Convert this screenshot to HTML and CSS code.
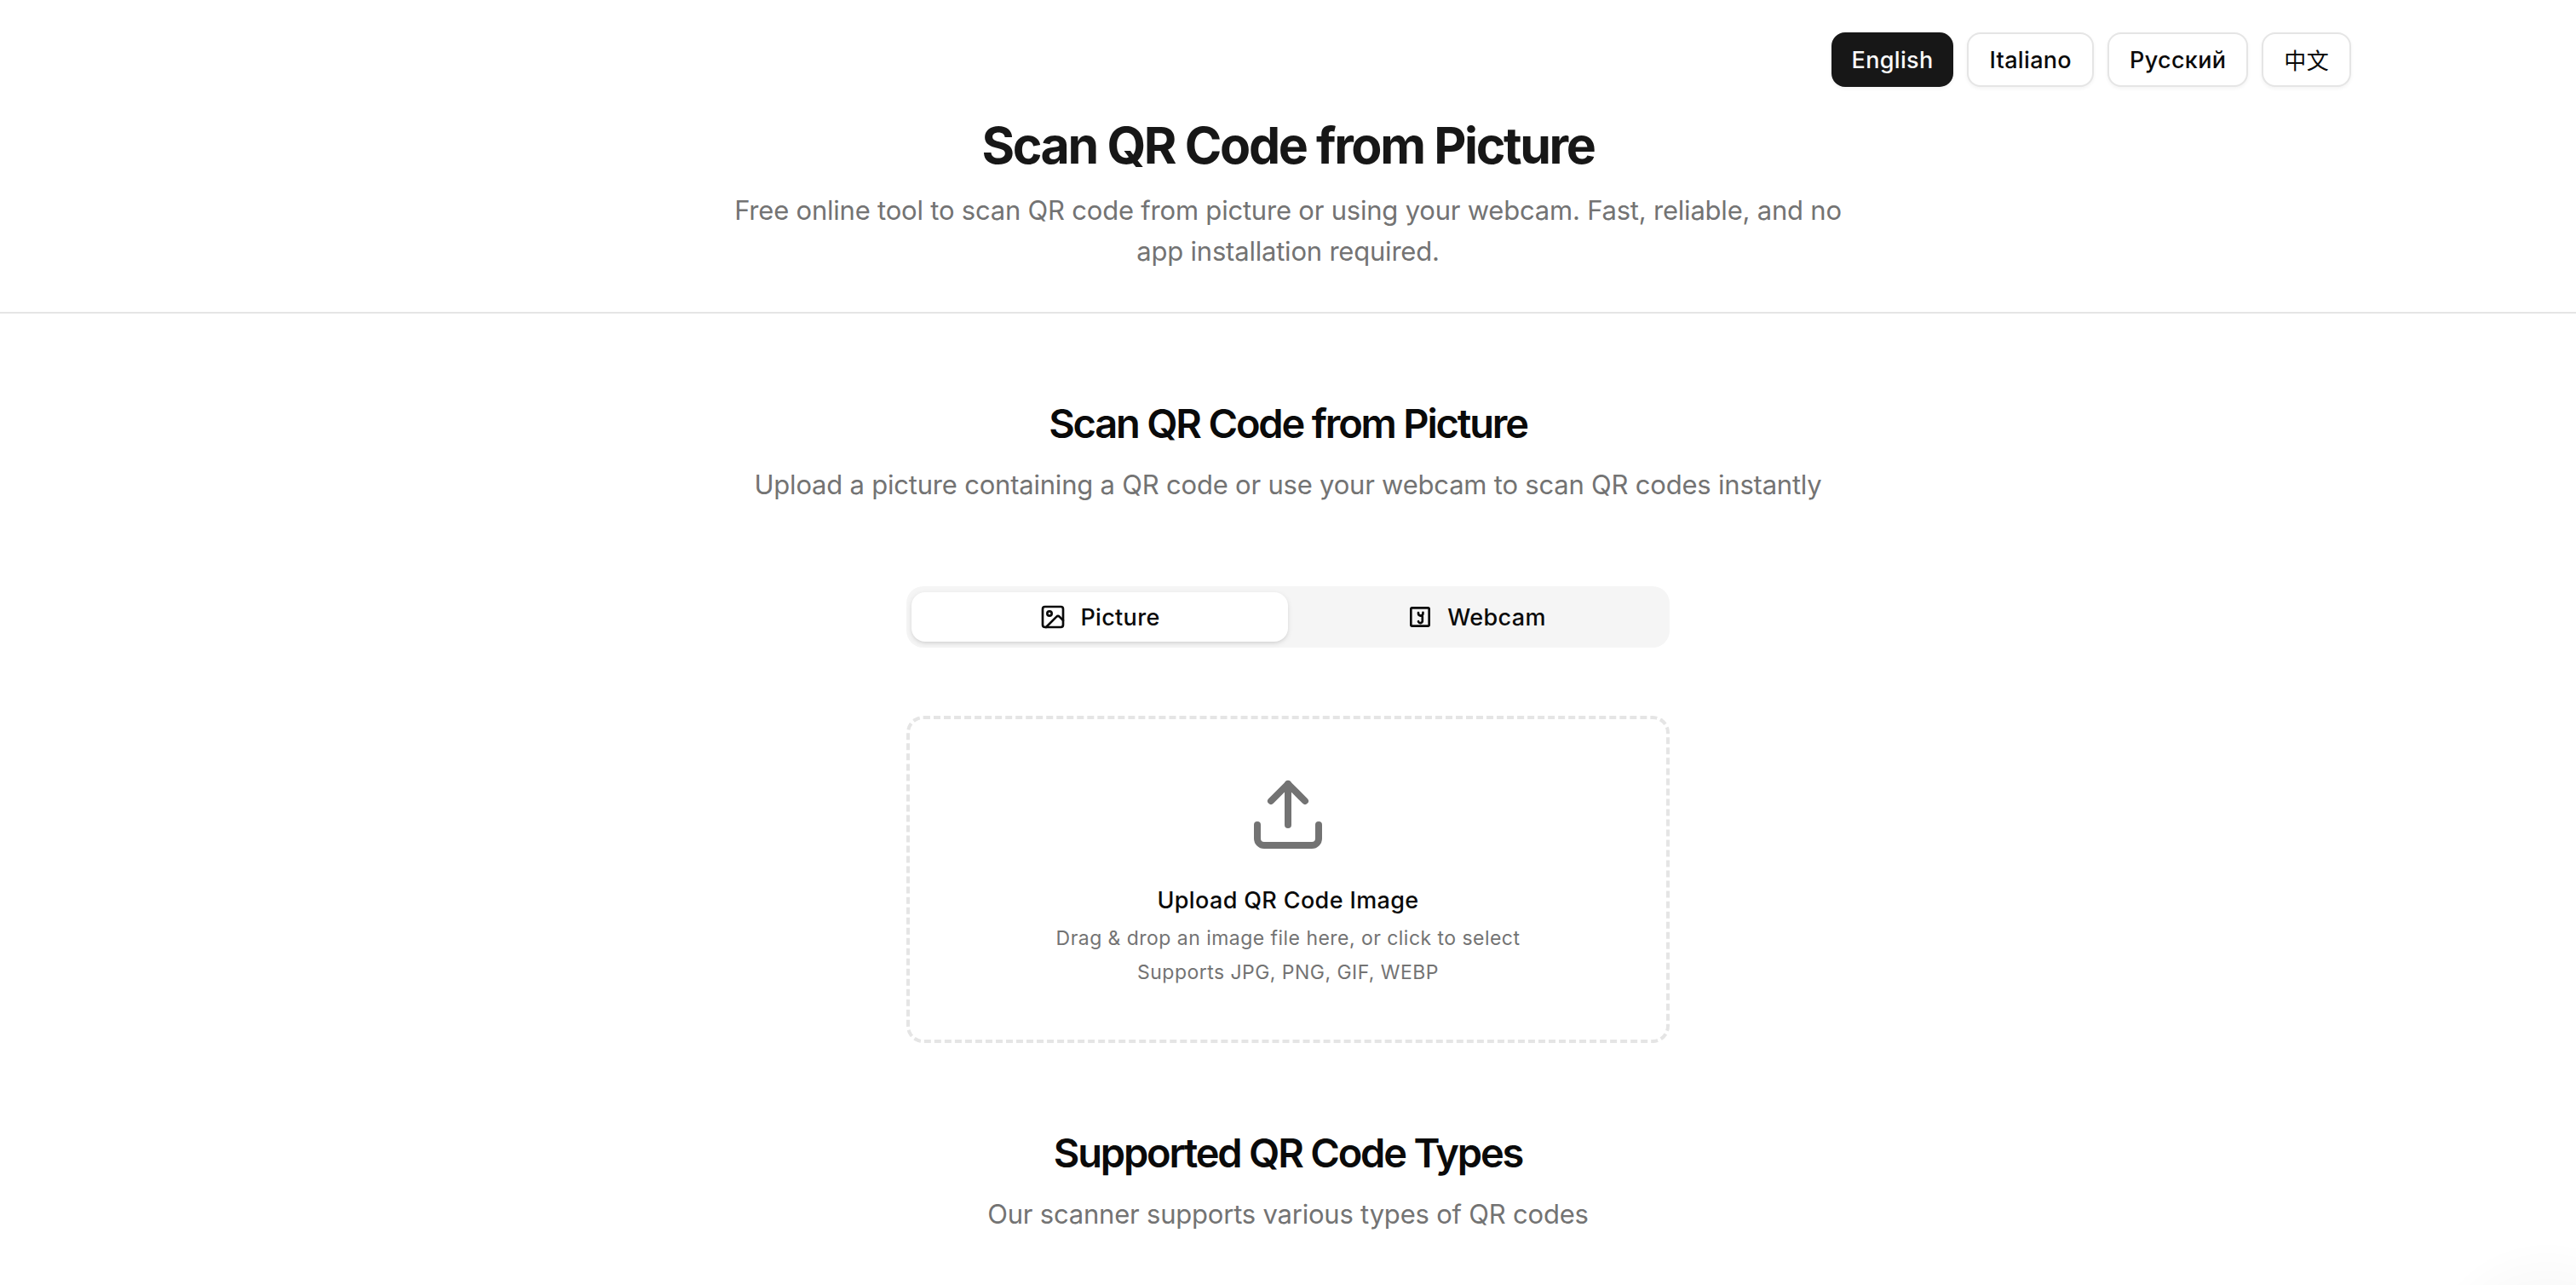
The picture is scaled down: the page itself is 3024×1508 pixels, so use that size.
FILE: index.html
```
<!DOCTYPE html>
<html lang="en">
<head>
    <meta charset="UTF-8">
    <meta name="viewport" content="width=device-width, initial-scale=1.0">
    <title>Scan QR Code from Picture</title>
    <link rel="stylesheet" href="styles.css">
</head>
<body>
    <header class="header">
        <nav class="languages">
            <button class="lang active">English</button>
            <button class="lang">Italiano</button>
            <button class="lang">Русский</button>
            <button class="lang lang-zh" lang="zh">中文</button>
        </nav>
        <h1>Scan QR Code from Picture</h1>
        <p class="lead header-lead">Free online tool to scan QR code from picture or using your webcam. Fast, reliable, and no app installation required.</p>
    </header>

    <main class="main">
        <section class="section">
            <h2>Scan QR Code from Picture</h2>
            <p class="lead">Upload a picture containing a QR code or use your webcam to scan QR codes instantly</p>

            <div class="scanner">
                <div class="tabs">
                    <button class="tab active">
                        <svg class="tab-icon" viewBox="0 0 24 24">
                            <rect x="3" y="3" width="18" height="18" rx="2"/>
                            <circle cx="9" cy="9" r="2"/>
                            <path d="m21 15-3.086-3.086a2 2 0 0 0-2.828 0L6 21"/>
                        </svg>
                        Picture
                    </button>
                    <button class="tab">
                        <svg class="tab-icon" viewBox="0 0 24 24">
                            <rect x="4" y="4" width="16" height="16" rx="1"/>
                            <path d="M10.5 8.3v.6a2.05 2.05 0 0 0 4.1 0v-.8"/>
                            <path d="M12.7 11h.4a1 1 0 0 1 1 1v3.2a1.8 1.8 0 0 1-3.6.7"/>
                        </svg>
                        Webcam
                    </button>
                </div>

                <div class="dropzone">
                    <svg class="upload-icon" viewBox="0 0 24 24">
                        <path d="M3 15v4a2 2 0 0 0 2 2h14a2 2 0 0 0 2-2v-4"/>
                        <path d="m7 8 5-5 5 5"/>
                        <path d="M12 3v12"/>
                    </svg>
                    <p class="dropzone-title">Upload QR Code Image</p>
                    <p class="dropzone-text">Drag &amp; drop an image file here, or click to select</p>
                    <p class="dropzone-text">Supports JPG, PNG, GIF, WEBP</p>
                </div>
            </div>
        </section>

        <section class="section">
            <h2>Supported QR Code Types</h2>
            <p class="lead">Our scanner supports various types of QR codes</p>
        </section>
    </main>

    <div class="corner-glow"></div>
</body>
</html>
```
FILE: styles.css
```
* {
    box-sizing: border-box;
    margin: 0;
    padding: 0;
}
body {
    font-family: Inter, "Noto Sans CJK SC", sans-serif;
    background-color: #fff;
    color: #0a0a0a;
    height: 100vh;
    overflow: hidden;
}
.header {
    padding: 38px 0 47px;
    border-bottom: 2px solid #e5e5e5;
    text-align: center;
}
.languages {
    display: flex;
    justify-content: flex-end;
    gap: 16px;
    width: 2560px;
    margin: 0 auto 33px;
    padding-right: 32px;
}
.lang {
    height: 64px;
    padding: 0 24px;
    border: 2px solid #e5e5e5;
    border-radius: 16px;
    background-color: #fff;
    box-shadow: 0 2px 4px rgba(0, 0, 0, 0.05);
    color: #0a0a0a;
    font-family: inherit;
    font-size: 27px;
    font-weight: 500;
    letter-spacing: 0.33px;
}
.lang.active {
    border: none;
    background-color: #171717;
    color: #fafafa;
}
.lang-zh {
    padding-bottom: 2px;
    font-size: 26px;
    font-weight: 400;
}
h1 {
    color: #171717;
    font-size: 59px;
    font-weight: 700;
    line-height: 72px;
    letter-spacing: -2.38px;
}
h2 {
    font-size: 47px;
    font-weight: 600;
    line-height: 64px;
    letter-spacing: -2.2px;
}
.lead {
    margin-top: 16px;
    color: #737373;
    font-size: 31px;
    line-height: 48px;
    letter-spacing: -0.21px;
}
.header-lead {
    width: 1344px;
    margin: 16px auto 0;
}
.main {
    display: flex;
    flex-direction: column;
    gap: 97px;
    padding-top: 97px;
}
.section {
    text-align: center;
}
.scanner {
    width: 896px;
    margin: 95px auto 0;
}
.tabs {
    display: grid;
    grid-template-columns: 1fr 1fr;
    align-items: center;
    height: 72px;
    padding: 0 6px;
    border-radius: 20px;
    background-color: #f5f5f5;
}
.tab {
    display: flex;
    align-items: center;
    justify-content: center;
    gap: 16px;
    height: 58px;
    border: none;
    border-radius: 16px;
    background: none;
    color: #0a0a0a;
    font-family: inherit;
    font-size: 27px;
    font-weight: 500;
    letter-spacing: 0.33px;
}
.tab.active {
    background-color: #fff;
    box-shadow: 0 2px 6px rgba(0, 0, 0, 0.1), 0 2px 4px -2px rgba(0, 0, 0, 0.1);
}
svg {
    fill: none;
    stroke: currentColor;
    stroke-width: 2;
    stroke-linecap: round;
    stroke-linejoin: round;
}
.tab-icon {
    width: 32px;
    height: 32px;
}
.dropzone {
    display: flex;
    flex-direction: column;
    align-items: center;
    gap: 8px;
    height: 384px;
    margin-top: 80px;
    padding-top: 64px;
    border: 4px dashed #e5e5e5;
    border-radius: 20px;
}
.upload-icon {
    width: 96px;
    height: 96px;
    margin-bottom: 25px;
    color: #737373;
}
.dropzone-title {
    font-size: 27px;
    font-weight: 500;
    line-height: 40px;
    letter-spacing: 0.36px;
}
.dropzone-text {
    color: #737373;
    font-size: 23px;
    line-height: 32px;
    letter-spacing: 0.46px;
}
/* faint shadow in the bottom right corner */
.corner-glow {
    position: fixed;
    right: 0;
    bottom: 0;
    width: 160px;
    height: 60px;
    background: radial-gradient(circle at 126px 153px, rgba(0, 0, 0, 0.018) 95px, transparent 145px);
}
```
